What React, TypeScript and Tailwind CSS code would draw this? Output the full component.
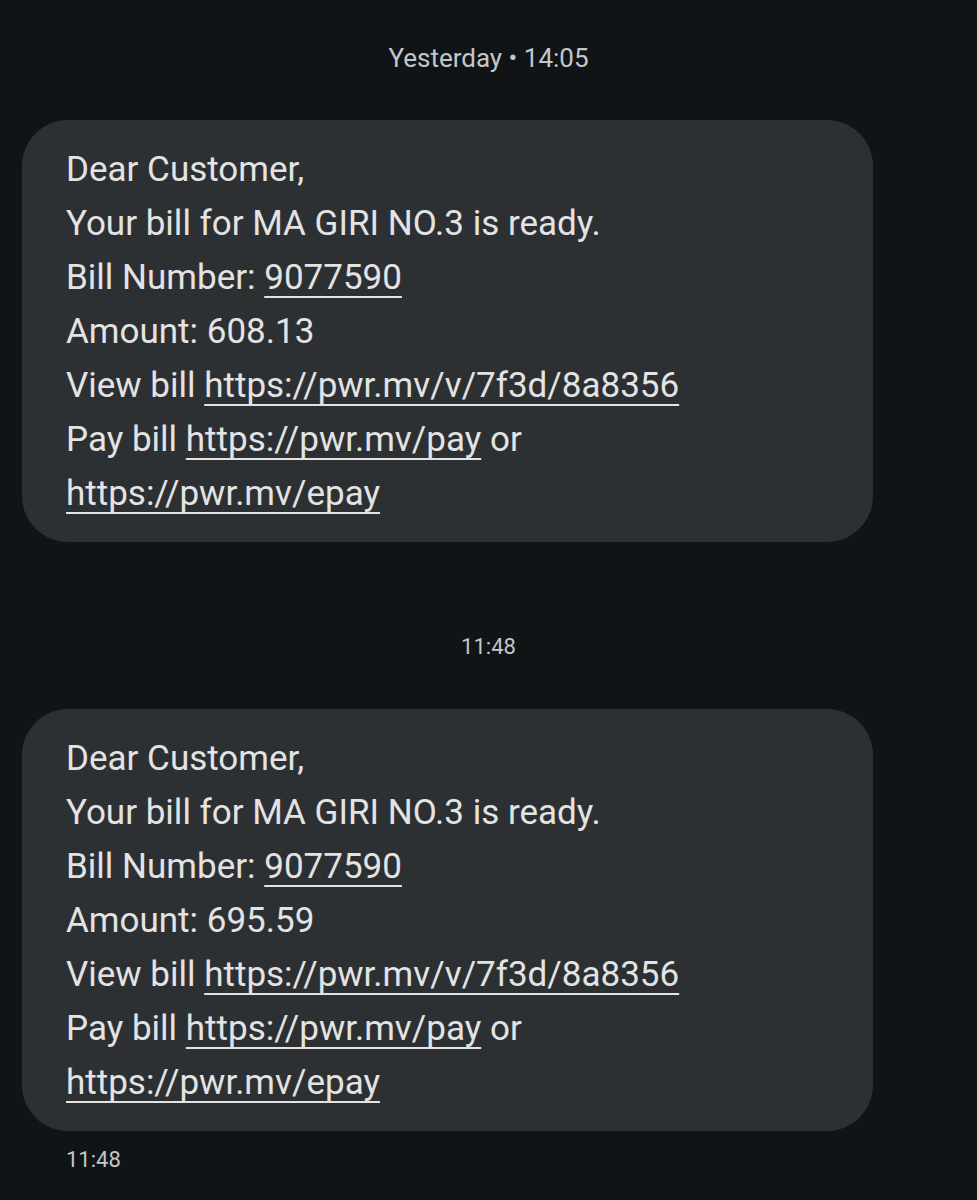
const link = "underline decoration-2 underline-offset-[7px]";

function Bubble({ amount }: { amount: string }) {
  return (
    <div className="ml-[22px] w-[851px] rounded-[46px] bg-[#2d3033] pl-[44px] pr-6 pt-[23px] pb-[21px] text-[35px] leading-[54px] text-[#e3e3e3]">
      <div>Dear Customer,</div>
      <div>Your bill for MA GIRI NO.3 is ready.</div>
      <div>
        Bill Number: <span className={link}>9077590</span>
      </div>
      <div>Amount: {amount}</div>
      <div>
        View bill <span className={link}>https://pwr.mv/v/7f3d/8a8356</span>
      </div>
      <div>
        Pay bill <span className={link}>https://pwr.mv/pay</span> or
      </div>
      <div>
        <span className={link}>https://pwr.mv/epay</span>
      </div>
    </div>
  );
}

export default function App() {
  return (
    <div
      className="min-h-screen bg-[#111417] pt-[42px]"
      style={{ fontFamily: "Roboto, 'Noto Sans', sans-serif" }}
    >
      <div className="text-center text-[26px] leading-[32px] text-[#c4c7c8]">
        Yesterday • 14:05
      </div>

      <div className="mt-[46px]">
        <Bubble amount="608.13" />
      </div>

      <div className="mt-[89px] text-center text-[22px] leading-[32px] text-[#c4c7c8]">
        11:48
      </div>

      <div className="mt-[46px]">
        <Bubble amount="695.59" />
      </div>

      <div className="mt-[13px] pl-[66px] text-[22px] leading-[32px] text-[#c4c7c8]">
        11:48
      </div>
    </div>
  );
}
